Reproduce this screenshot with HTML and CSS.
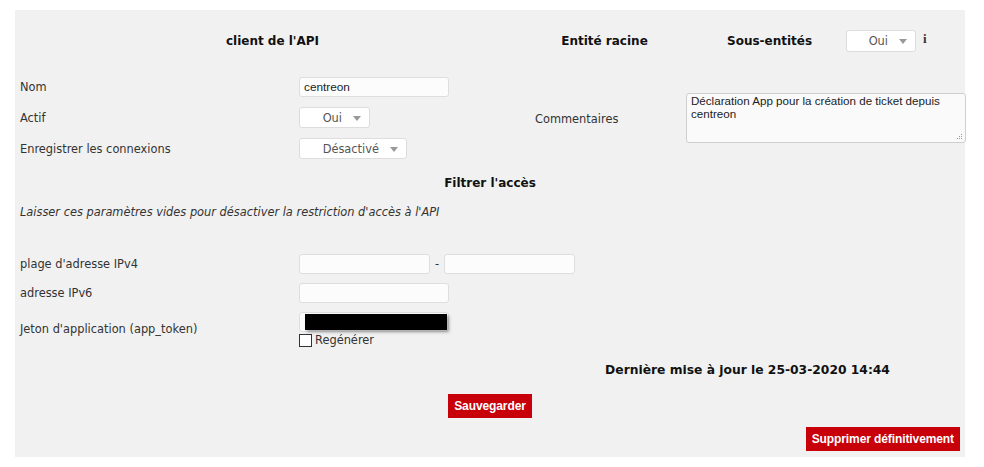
FILE: index.html
```html
<!DOCTYPE html>
<html lang="fr">
<head>
<meta charset="utf-8">
<title>client de l'API</title>
<link rel="stylesheet" href="styles.css">
</head>
<body>
<div class="panel">
  <div class="form">
    <div class="h-main">client de l'API</div>
    <div class="h-root">Entité racine</div>
    <div class="h-sub">
      <span class="h-sub-label">Sous-entités</span>
      <span class="select sel-sub">Oui<span class="arrow"></span></span>
      <span class="info">i</span>
    </div>

    <div class="label r-nom">Nom</div>
    <div class="field r-nom"><span class="input w150 txt">centreon</span></div>

    <div class="label r-actif">Actif</div>
    <div class="field r-actif"><span class="select sel-actif">Oui<span class="arrow"></span></span></div>

    <div class="label r-log">Enregistrer les connexions</div>
    <div class="field r-log"><span class="select sel-log">Désactivé<span class="arrow"></span></span></div>

    <div class="label-c">Commentaires</div>
    <div class="comment-cell">
      <div class="textarea">Déclaration App pour la création de ticket depuis centreon<svg class="grip" width="7" height="7" viewBox="0 0 7 7"><rect x="5" y="1" width="1" height="1"/><rect x="3" y="3" width="1" height="1"/><rect x="5" y="3" width="1" height="1"/><rect x="1" y="5" width="1" height="1"/><rect x="3" y="5" width="1" height="1"/><rect x="5" y="5" width="1" height="1"/></svg></div>
    </div>

    <div class="section">Filtrer l'accès</div>
    <div class="hint">Laisser ces paramètres vides pour désactiver la restriction d'accès à l'API</div>

    <div class="label r-ipv4">plage d'adresse IPv4</div>
    <div class="field r-ipv4 ipv4">
      <span class="input w131"></span><span class="dash">-</span><span class="input w131"></span>
    </div>

    <div class="label r-ipv6">adresse IPv6</div>
    <div class="field r-ipv6"><span class="input w150"></span></div>

    <div class="label r-token">Jeton d'application (app_token)</div>
    <div class="field r-token token">
      <span class="input w150 token-input"><span class="redact"></span></span>
      <label class="check"><span class="box"></span>Regénérer</label>
    </div>

    <div class="updated">Dernière mise à jour le 25-03-2020 14:44</div>
    <div class="save-row"><span class="btn">Sauvegarder</span></div>
    <div class="del-row"><span class="btn">Supprimer définitivement</span></div>
  </div>
</div>
</body>
</html>
```

FILE: styles.css
```css
* { box-sizing: border-box; }
html, body { margin: 0; padding: 0; background: #ffffff; }
body {
  font-family: "DejaVu Sans", Verdana, sans-serif;
  font-size: 11.4px;
  color: #333333;
}
.panel {
  margin: 10px 0 0 15px;
  width: 950px;
  height: 447px;
  background: #f1f1f1;
}
.form {
  display: grid;
  grid-template-columns: 284px 236px 151px 279px;
  grid-template-rows: 61px 31px 31px 31px 38px 20px 27px 29px 30px 42px 40px 31px 36px;
}
.h-main {
  grid-column: 1 / 3; grid-row: 1;
  display: flex; align-items: center; justify-content: center;
  padding-right: 5px;
  font-weight: bold; font-size: 12px; color: #111;
}
.h-root {
  grid-column: 3; grid-row: 1;
  display: flex; align-items: center; justify-content: center;
  padding-right: 12px;
  font-weight: bold; font-size: 12px; color: #111;
}
.h-sub {
  grid-column: 4; grid-row: 1;
  display: flex; align-items: center;
  padding-left: 41px;
}
.h-sub-label { font-weight: bold; font-size: 12px; color: #111; width: 119px; flex-shrink: 0; }
.info {
  margin-left: 7px;
  font-family: "Liberation Serif", serif; font-weight: bold; font-size: 13px; color: #333;
  position: relative; top: -2px;
}
.label {
  grid-column: 1;
  display: flex; align-items: center;
  padding-left: 5px;
}
.field {
  grid-column: 2;
  display: flex; align-items: center;
}
.r-nom { grid-row: 2; }
.r-actif { grid-row: 3; }
.r-log { grid-row: 4; }
.r-ipv4 { grid-row: 8; }
.r-ipv6 { grid-row: 9; }
.r-token { grid-row: 10; }
.label-c {
  grid-column: 3; grid-row: 2 / 5;
  display: flex; align-items: center;
  padding-top: 2px;
}
.comment-cell {
  grid-column: 4; grid-row: 2 / 5;
  display: flex; align-items: center;
}
.textarea {
  position: relative;
  width: 280px; height: 50px;
  flex-shrink: 0;
  background: #fafafa;
  border: 1px solid #cfcfcf;
  border-radius: 3px;
  padding: 0 4px;
  font-family: "Liberation Sans", Arial, sans-serif;
  font-size: 11.6px; line-height: 13px;
  color: #222;
}
.grip {
  position: absolute; right: 2px; bottom: 2px;
  fill: #9a9a9a;
}
.input {
  display: inline-flex; align-items: center;
  flex-shrink: 0;
  height: 20px;
  background: #fcfcfc;
  border: 1px solid #dedede;
  border-radius: 3px;
  padding: 0 4px;
}
.txt {
  font-family: "Liberation Sans", Arial, sans-serif; font-size: 11.8px; color: #222;
}
.w150 { width: 150px; }
.w131 { width: 131px; }
.select {
  position: relative;
  display: inline-flex; align-items: center; justify-content: flex-end;
  flex-shrink: 0;
  height: 21px;
  background: #ffffff;
  border: 1px solid #dddddd;
  border-radius: 3px;
  padding-right: 27px;
  color: #555;
  font-size: 11.4px;
}
.arrow {
  position: absolute; right: 8px; top: 8px;
  width: 0; height: 0;
  border-left: 4px solid transparent;
  border-right: 4px solid transparent;
  border-top: 5px solid #999;
}
.sel-sub { width: 70px; height: 22px; }
.sel-actif { width: 71px; }
.sel-log { width: 108px; }
.section {
  grid-column: 1 / 5; grid-row: 5;
  display: flex; align-items: center; justify-content: center;
  font-weight: bold; font-size: 12px; color: #111;
}
.hint {
  grid-column: 1 / 5; grid-row: 6;
  display: flex; align-items: center;
  padding-left: 5px;
  font-style: italic;
}
.ipv4 .dash { width: 14px; text-align: center; color: #333; flex-shrink: 0; }
.token { flex-direction: column; align-items: flex-start; justify-content: flex-start; padding-top: 4px; }
.token-input { position: relative; padding: 0; }
.redact {
  position: absolute; left: 5px; top: 1px;
  width: 142px; height: 16px;
  background: #000;
  box-shadow: 2px 2px 3px rgba(0,0,0,0.35);
}
.check { display: flex; align-items: center; margin-top: 1px; color: #333; }
.box {
  width: 13px; height: 13px;
  border: 1px solid #333; background: #fff;
  margin-right: 3px;
}
.updated {
  grid-column: 3 / 5; grid-row: 11;
  display: flex; align-items: center; justify-content: center;
  padding-right: 5px;
  font-weight: bold; font-size: 12.3px; color: #111;
}
.save-row {
  grid-column: 1 / 5; grid-row: 12;
  display: flex; align-items: center; justify-content: center;
}
.del-row {
  grid-column: 1 / 5; grid-row: 13;
  display: flex; align-items: center; justify-content: flex-end;
  padding-right: 5px;
}
.btn {
  display: inline-flex; align-items: center;
  height: 24px;
  padding: 0 6px;
  background: #c8000a;
  color: #ffffff;
  font-family: "Liberation Sans", Arial, sans-serif;
  font-weight: bold; font-size: 12px;
  letter-spacing: -0.1px;
}
```
